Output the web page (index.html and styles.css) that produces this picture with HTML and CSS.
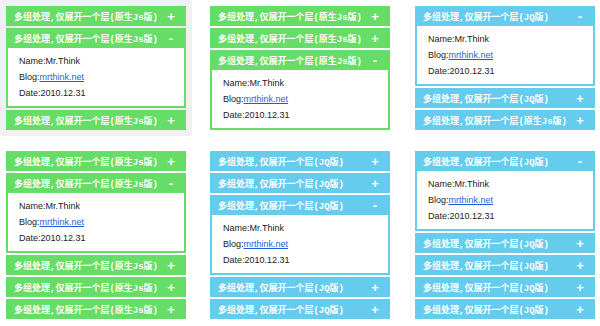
FILE: index.html
```html
<!DOCTYPE html>
<html lang="zh-CN">
  <head>
    <meta charset="UTF-8">
    <title>多组处理,仅展开一个层</title>
    <link rel="stylesheet" href="styles.css">
  </head>
  <body>
    <div class="demos">
      <!-- 第一行 -->
      <div class="cell col-1">
        <div class="acc green shaded">
          <div class="acc-hd"><span>多组处理,仅展开一个层(原生Js版)</span><b>+</b></div>
          <div class="acc-hd open"><span>多组处理,仅展开一个层(原生Js版)</span><b>-</b></div>
          <div class="acc-bd">
            <p>Name:Mr.Think</p>
            <p>Blog:<a href="#">mrthink.net</a></p>
            <p>Date:2010.12.31</p>
          </div>
          <div class="acc-hd"><span>多组处理,仅展开一个层(原生Js版)</span><b>+</b></div>
        </div>
      </div>
      <div class="cell col-2">
        <div class="acc green">
          <div class="acc-hd"><span>多组处理,仅展开一个层(原生Js版)</span><b>+</b></div>
          <div class="acc-hd"><span>多组处理,仅展开一个层(原生Js版)</span><b>+</b></div>
          <div class="acc-hd open"><span>多组处理,仅展开一个层(原生Js版)</span><b>-</b></div>
          <div class="acc-bd">
            <p>Name:Mr.Think</p>
            <p>Blog:<a href="#">mrthink.net</a></p>
            <p>Date:2010.12.31</p>
          </div>
        </div>
      </div>
      <div class="cell col-3">
        <div class="acc blue">
          <div class="acc-hd open"><span>多组处理,仅展开一个层(JQ版)</span><b>-</b></div>
          <div class="acc-bd">
            <p>Name:Mr.Think</p>
            <p>Blog:<a href="#">mrthink.net</a></p>
            <p>Date:2010.12.31</p>
          </div>
          <div class="acc-hd"><span>多组处理,仅展开一个层(JQ版)</span><b>+</b></div>
          <div class="acc-hd"><span>多组处理,仅展开一个层(原生Js版)</span><b>+</b></div>
        </div>
      </div>

      <!-- 第二行 -->
      <div class="cell col-1">
        <div class="acc green">
          <div class="acc-hd"><span>多组处理,仅展开一个层(原生Js版)</span><b>+</b></div>
          <div class="acc-hd open"><span>多组处理,仅展开一个层(原生Js版)</span><b>-</b></div>
          <div class="acc-bd">
            <p>Name:Mr.Think</p>
            <p>Blog:<a href="#">mrthink.net</a></p>
            <p>Date:2010.12.31</p>
          </div>
          <div class="acc-hd"><span>多组处理,仅展开一个层(原生Js版)</span><b>+</b></div>
          <div class="acc-hd"><span>多组处理,仅展开一个层(原生Js版)</span><b>+</b></div>
          <div class="acc-hd"><span>多组处理,仅展开一个层(原生Js版)</span><b>+</b></div>
        </div>
      </div>
      <div class="cell col-2">
        <div class="acc blue">
          <div class="acc-hd"><span>多组处理,仅展开一个层(JQ版)</span><b>+</b></div>
          <div class="acc-hd"><span>多组处理,仅展开一个层(JQ版)</span><b>+</b></div>
          <div class="acc-hd open"><span>多组处理,仅展开一个层(JQ版)</span><b>-</b></div>
          <div class="acc-bd">
            <p>Name:Mr.Think</p>
            <p>Blog:<a href="#">mrthink.net</a></p>
            <p>Date:2010.12.31</p>
          </div>
          <div class="acc-hd"><span>多组处理,仅展开一个层(JQ版)</span><b>+</b></div>
          <div class="acc-hd"><span>多组处理,仅展开一个层(JQ版)</span><b>+</b></div>
        </div>
      </div>
      <div class="cell col-3">
        <div class="acc blue">
          <div class="acc-hd open"><span>多组处理,仅展开一个层(JQ版)</span><b>-</b></div>
          <div class="acc-bd">
            <p>Name:Mr.Think</p>
            <p>Blog:<a href="#">mrthink.net</a></p>
            <p>Date:2010.12.31</p>
          </div>
          <div class="acc-hd"><span>多组处理,仅展开一个层(JQ版)</span><b>+</b></div>
          <div class="acc-hd"><span>多组处理,仅展开一个层(JQ版)</span><b>+</b></div>
          <div class="acc-hd"><span>多组处理,仅展开一个层(JQ版)</span><b>+</b></div>
          <div class="acc-hd"><span>多组处理,仅展开一个层(JQ版)</span><b>+</b></div>
        </div>
      </div>
    </div>
  </body>
</html>
```

FILE: styles.css
```css
* { box-sizing: border-box; margin: 0; padding: 0; }
:root {
  --green: #66dd66;
  --blue: #66ccee;
}
body {
  font-family: "Liberation Sans", "Noto Sans CJK SC", sans-serif;
  background: #fff;
  color: #222;
}
.demos {
  display: grid;
  grid-template-columns: 200px 200px 200px;
  grid-template-rows: 145px 181px;
}
.cell {
  padding-top: 6px;
}
.col-1 {
  padding-left: 6px;
}
.col-2 {
  padding-left: 10px;
}
.col-3 {
  padding-left: 15px;
}
.acc {
  width: 180px;
  display: flex;
  flex-direction: column;
  gap: 2px;
}
.acc.shaded {
  background: #f0f0f0;
  box-shadow: 0 0 0 6px #f0f0f0;
}
.acc-hd {
  height: 20px;
  display: flex;
  align-items: center;
  justify-content: space-between;
  padding: 0 11px 0 8px;
  color: #fff;
  font-family: "Liberation Mono", "Noto Sans CJK SC", monospace;
  font-size: 9px;
  font-weight: 700;
  white-space: nowrap;
}
.acc-hd b {
  font-family: "Liberation Sans", sans-serif;
  font-size: 13px;
  width: 8px;
  text-align: center;
}
.green .acc-hd { background: var(--green); }
.blue .acc-hd { background: var(--blue); }
.acc-hd.open + .acc-bd {
  margin-top: -2px;
}
.acc-bd {
  background: #fff;
  border: 2px solid;
  border-top: none;
  padding: 5px 11px 5px;
  font-size: 9px;
  line-height: 16px;
}
.green .acc-bd { border-color: var(--green); }
.blue .acc-bd { border-color: var(--blue); }
.acc-bd a {
  color: #1a5fd8;
}
```
